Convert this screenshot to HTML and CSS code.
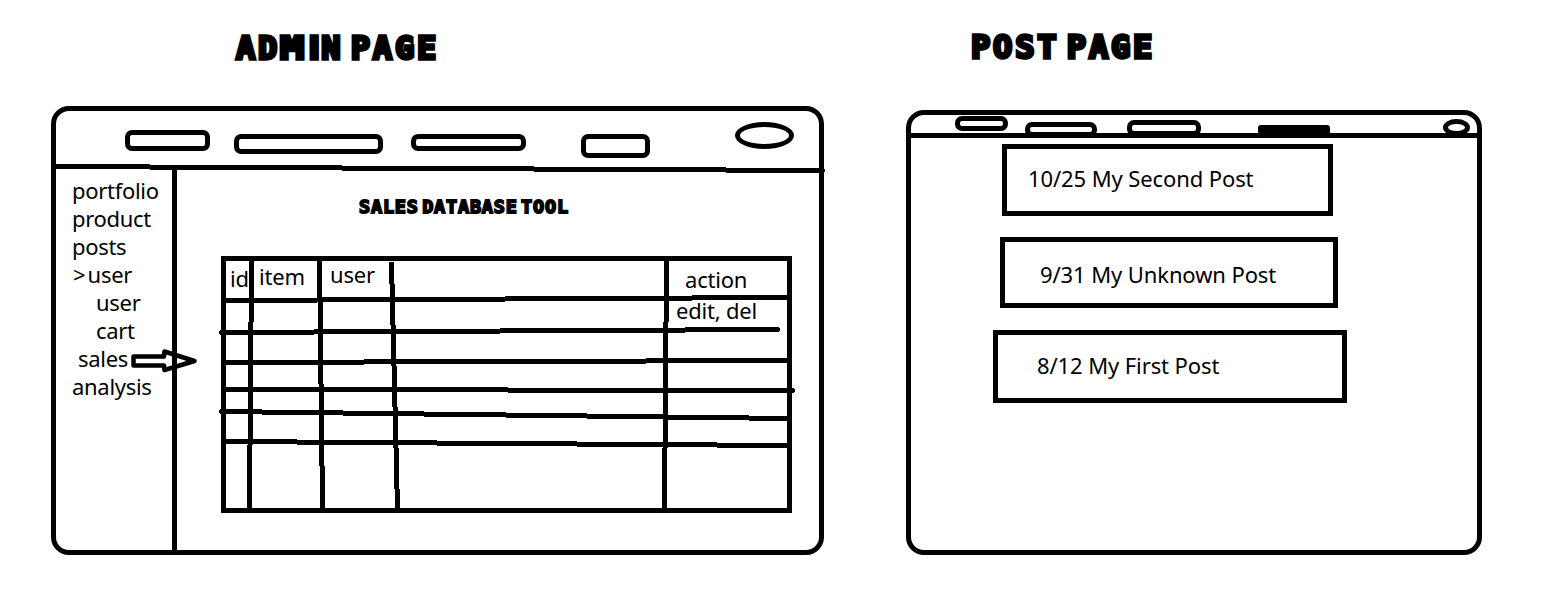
FILE: index.html
```
<!DOCTYPE html>
<html lang="en">
<head>
<meta charset="utf-8">
<title>Admin and post wireframes</title>
<link rel="stylesheet" href="styles.css">
</head>
<body>
<main class="board">
  <section class="screen admin">
    <h1 class="title">AD<span class="wide">M</span><span class="slim">I</span>N PAGE</h1>
    <div class="frame">
      <nav class="topbar">
        <span class="pill p1"></span><span class="pill p2"></span><span class="pill p3"></span><span class="pill p4"></span><span class="pill avatar"></span>
      </nav>
      <div class="content">
        <ul class="sidebar">
          <li>portfolio</li>
          <li>product</li>
          <li>posts</li>
          <li class="open">&gt;user</li>
          <li class="child">user</li>
          <li class="child">cart</li>
          <li class="current">sales</li>
          <li>analysis</li>
        </ul>
        <div class="tool">
          <h2 class="subtitle">SALES DATABASE TOOL</h2>
          <div class="table">
            <span class="id">id</span><span class="item">item</span><span class="user">user</span>
            <div class="actions"><span class="action">action</span><span class="edit">edit, del</span></div>
          </div>
        </div>
      </div>
      <svg class="strokes" viewBox="51 106 780 449" width="780" height="449">
        <g class="line">
          <path d="M56 166.500H150M150 167.500H342M342 168.500H534M534 169.500H726M726 170.500H824"/>
          <path d="M174.500 168V550"/>
          <path d="M251.500 258V322M250.500 322V445M249.500 445V510"/>
          <path d="M319.500 258V301M320.500 301V384M321.500 384V466M322.500 466V510"/>
          <path d="M391.500 262V284M392.500 284V325M393.500 325V366M394.500 366V407M395.500 407V448M396.500 448V489M397.500 489V510"/>
          <path d="M666.500 258V322M665.500 322V448M664.500 448V513"/>
          <path d="M226 300.500H317M317 299.500H505M505 298.500H692M692 297.500H789"/>
          <path d="M220 332.500H314M314 331.500H500M500 330.500H685M685 329.500H779"/>
          <path d="M226 362.500H364M364 361.500H646M646 360.500H789"/>
          <path d="M226 389.500H508M508 390.500H794"/>
          <path d="M220 411.500H262M262 412.500H343M343 413.500H424M424 414.500H506M506 415.500H587M587 416.500H667M667 417.500H749M749 418.500H789"/>
          <path d="M226 441.500H297M297 442.500H437M437 443.500H577M577 444.500H717M717 445.500H789"/>
        </g>
        <g class="tips"><path d="M219.500 331v3M779.500 328v3M219.500 410v3M794.500 389v3M824.500 169v3"/></g>
        <path class="arrow" d="M133.500 356.500H164L164.500 351.500L194.500 361L164.500 370L164 365.500H133.500Z"/>
      </svg>
    </div>
  </section>

  <section class="screen post">
    <h1 class="title">POST PAGE</h1>
    <div class="frame">
      <nav class="topbar">
        <span class="pill p1"></span><span class="pill p2"></span><span class="pill p3"></span><span class="pill p4"></span><span class="pill avatar"></span>
      </nav>
      <div class="posts">
        <article class="card second">10/25 My Second Post</article>
        <article class="card unknown">9/31 My Unknown Post</article>
        <article class="card first">8/12 My First Post</article>
      </div>
    </div>
  </section>
</main>
</body>
</html>
```

FILE: styles.css
```
* { box-sizing: border-box; }
body {
  margin: 0;
  background: #fff;
  color: #000;
  font: 22px/28px "Noto Sans", "Open Sans", sans-serif;
}
.board {
  display: flex;
  gap: 82px;
  width: 1544px;
  height: 607px;
  padding-left: 51px;
  overflow: hidden;
}
.screen { display: flex; flex-direction: column; }
.admin { width: 773px; }
.post { width: 576px; }

.title, .subtitle {
  margin: 0;
  font-family: "DejaVu Sans Mono", monospace;
  font-weight: 700;
  white-space: nowrap;
}
.title {
  font-size: 32px;
  line-height: 40px;
  letter-spacing: 2.8px;
  word-spacing: -14.5px;
  -webkit-text-stroke: 3.4px #000;
}
.wide { display: inline-block; width: 30px; transform: scaleX(1.25); transform-origin: 0 50%; }
.slim { display: inline-block; width: 11px; font-family: "DejaVu Sans", sans-serif; text-indent: -2px; }
.admin .title { height: 106px; padding: 28px 0 0 185px; }
.post .title { height: 110px; padding: 27px 0 0 65px; }

.frame {
  position: relative;
  display: flex;
  flex-direction: column;
  border: 5px solid #000;
  border-radius: 18px;
}
.admin .frame { height: 449px; }
.post .frame { height: 445px; }

.topbar { display: flex; align-items: flex-start; flex: none; }
.pill { flex: none; border: 5px solid #000; border-radius: 7px; }

.admin .topbar { height: 60px; padding-left: 69px; }
.admin .p1 { width: 85px; height: 21px; margin-top: 19px; }
.admin .p2 { width: 149px; height: 20px; margin: 23px 0 0 24px; }
.admin .p3 { width: 115px; height: 17px; margin: 23px 0 0 28px; }
.admin .p4 { width: 69px; height: 24px; margin: 23px 0 0 55px; }
.admin .avatar { width: 59px; height: 27px; margin: 11px 0 0 85px; border-radius: 50%; }

.content { display: flex; flex: 1; }
.sidebar {
  width: 121px;
  margin: 0;
  padding: 5px 0 0 16px;
  list-style: none;
  white-space: nowrap;
  letter-spacing: -0.3px;
}
.open { padding-left: 1px; }
.open::first-letter { letter-spacing: 2px; }
.child { padding-left: 24px; }
.current { padding-left: 6px; }

.tool { width: 642px; padding: 21px 0 0 44px; }
.subtitle {
  height: 64px;
  padding: 3px 0 0 138px;
  font-size: 18.5px;
  line-height: 24px;
  letter-spacing: 0.8px;
  word-spacing: -8.5px;
  -webkit-text-stroke: 1.8px #000;
}
.table {
  display: flex;
  width: 571px;
  height: 257px;
  border: 5px solid #000;
  white-space: nowrap;
  letter-spacing: -0.2px;
}
.id { width: 29px; padding: 3px 0 0 4px; }
.item { width: 71px; padding: 1px 0 0 4px; }
.user { width: 342px; padding-left: 4px; margin-top: -1px; }
.actions { display: flex; flex-direction: column; }
.action { height: 35px; padding: 4px 0 0 17px; }
.edit { padding-left: 8px; }

.strokes { position: absolute; left: -5px; top: -5px; overflow: visible; }
.line, .tips { fill: none; stroke: #000; stroke-width: 5px; shape-rendering: crispEdges; }
.tips { stroke-width: 1px; }
.arrow { fill: none; stroke: #000; stroke-width: 4.5px; stroke-linejoin: round; }

.post .topbar { height: 23px; padding-left: 44px; border-bottom: 5px solid #000; }
.post .p1 { width: 53px; height: 15px; margin-top: 1px; }
.post .p2 { width: 72px; height: 15px; margin: 7px 0 0 17px; }
.post .p3 { width: 74px; height: 16px; margin: 5px 0 0 30px; }
.post .p4 { width: 72px; height: 10px; margin: 10px 0 0 57px; border-radius: 3px; background: #000; }
.post .avatar { width: 27px; height: 17px; margin: 4px 0 0 113px; border-radius: 50%; }

.posts { display: flex; flex-direction: column; align-items: flex-start; padding-top: 6px; }
.card { border: 5px solid #000; white-space: nowrap; letter-spacing: -0.1px; }
.second { width: 331px; height: 72px; margin-left: 91px; padding: 15px 0 0 21px; }
.unknown { width: 338px; height: 71px; margin: 21px 0 0 89px; padding: 18px 0 0 35px; }
.first { width: 354px; height: 73px; margin: 22px 0 0 82px; padding: 16px 0 0 39px; }
```
